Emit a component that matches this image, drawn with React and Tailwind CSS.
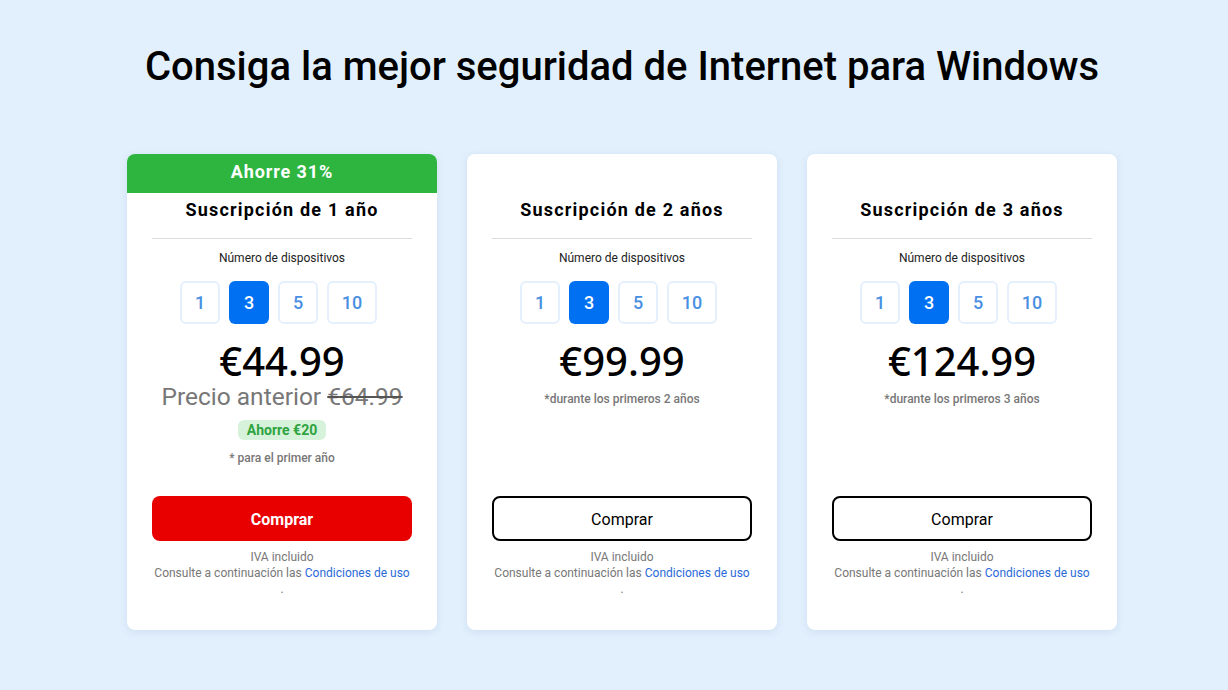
import { useState } from 'react'

const plans = [
  {
    id: 1,
    title: 'Suscripción de 1 año',
    price: '€44.99',
    banner: 'Ahorre 31%',
    oldPrice: '€64.99',
    saving: 'Ahorre €20',
    note: '* para el primer año',
    primary: true,
  },
  {
    id: 2,
    title: 'Suscripción de 2 años',
    price: '€99.99',
    note: '*durante los primeros 2 años',
  },
  {
    id: 3,
    title: 'Suscripción de 3 años',
    price: '€124.99',
    note: '*durante los primeros 3 años',
  },
]

const deviceOptions = [1, 3, 5, 10]

function PlanCard({ plan }) {
  const [devices, setDevices] = useState(3)

  return (
    <article className="flex h-[476px] w-[310px] flex-col overflow-hidden rounded-lg bg-white shadow-[0_2px_8px_rgba(30,80,140,0.10)]">
      {plan.banner ? (
        <div className="flex h-[39px] items-center justify-center bg-[#2db53f] pb-[4px] text-[18px] font-bold tracking-[0.9px] text-white">
          {plan.banner}
        </div>
      ) : (
        <div className="h-[39px]" />
      )}

      <div className="flex flex-1 flex-col px-[25px] pb-[33px]">
        <h2 className="mt-[5px] text-center text-[18px] font-bold leading-[24px] tracking-[1.2px] text-black">
          {plan.title}
        </h2>
        <div className="mt-[16px] h-px bg-[#dcdcdc]" />
        <p className="mt-[11px] text-center text-[12px] leading-[16px] text-[#222]">Número de dispositivos</p>

        <div className="mt-[15px] flex justify-center gap-[9px] pr-[7px]">
          {deviceOptions.map((option) => (
            <button
              key={option}
              type="button"
              onClick={() => setDevices(option)}
              className={
                devices === option
                  ? 'flex h-[43px] w-[40px] items-center justify-center rounded-md bg-[#0070f3] text-[18px] font-medium text-white'
                  : option === 10
                    ? 'flex h-[43px] w-[50px] items-center justify-center rounded-md border-2 border-[#e4f0fc] bg-white text-[18px] font-medium text-[#4a90e2]'
                    : 'flex h-[43px] w-[40px] items-center justify-center rounded-md border-2 border-[#e4f0fc] bg-white text-[18px] font-medium text-[#4a90e2]'
              }
            >
              {option}
            </button>
          ))}
        </div>

        <p className="mt-[15px] text-center font-['Noto_Sans',sans-serif] text-[40px] font-medium leading-[44px] text-black">
          {plan.price}
        </p>

        {plan.oldPrice ? (
          <>
            <p className="text-center text-[24.5px] leading-[28px] text-[#777]">
              Precio anterior <span className="line-through decoration-[#555]">{plan.oldPrice}</span>
            </p>
            <div className="mt-[9px] flex justify-center">
              <span className="flex h-[20px] items-center rounded-md bg-[#d6f2da] px-[9px] text-[14px] font-bold text-[#2ea33f]">
                {plan.saving}
              </span>
            </div>
            <p className="mt-[10px] text-center text-[12px] font-medium leading-[16px] text-[#777]">{plan.note}</p>
          </>
        ) : (
          <p className="mt-[8px] text-center text-[12px] font-medium leading-[16px] text-[#777]">{plan.note}</p>
        )}

        <div className="mt-auto">
          <button
            type="button"
            className={
              plan.primary
                ? 'flex h-[45px] w-full items-center justify-center rounded-lg bg-[#e80000] pt-[2px] text-[16px] font-bold text-white'
                : 'flex h-[45px] w-full items-center justify-center rounded-lg border-2 border-black bg-white pt-[2px] text-[16px] text-black'
            }
          >
            Comprar
          </button>
          <p className="mt-[8px] text-center text-[12px] leading-[16px] text-[#777]">IVA incluido</p>
          <p className="text-center text-[12px] leading-[16px] text-[#777]">
            Consulte a continuación las <a className="text-[#2a6ad8]">Condiciones de uso</a>
          </p>
          <p className="text-center text-[12px] leading-[16px] text-[#777]">.</p>
        </div>
      </div>
    </article>
  )
}

function App() {
  return (
    <main className="flex min-h-[690px] flex-col items-center bg-[#e2f0fd] pl-[16px] pt-[43px] font-['Roboto',sans-serif]">
      <h1 className="text-[40px] font-medium leading-[48px] text-black">
        Consiga la mejor seguridad de Internet para Windows
      </h1>
      <section className="mt-[63px] flex justify-center gap-[30px]">
        {plans.map((plan) => (
          <PlanCard key={plan.id} plan={plan} />
        ))}
      </section>
    </main>
  )
}

export default App
